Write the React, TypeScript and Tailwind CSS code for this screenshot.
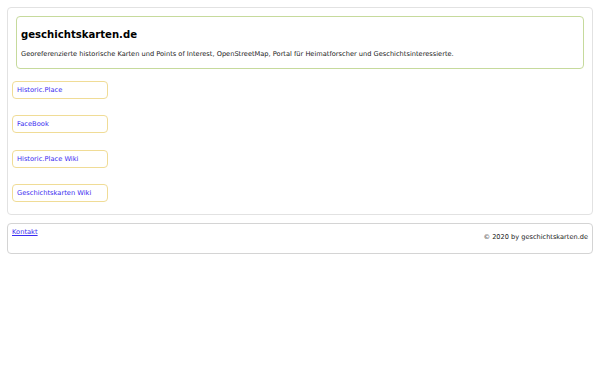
export default function App() {
  const links = ["Historic.Place", "FaceBook", "Historic.Place Wiki", "Geschichtskarten Wiki"];
  return (
    <div className="w-[600px] h-[375px] bg-white px-[7px] pt-[7px]" style={{ fontFamily: '"DejaVu Sans", sans-serif' }}>
      <div className="border border-[#e2e2e2] rounded-[4px] px-[4px] pt-[8px] pb-[12px]">
        <div className="mx-[4px] border border-[#c6da9c] rounded-[4px] px-[4px] pt-[10px] pb-[9px]">
          <div className="text-[10.1px] font-bold text-black leading-[15px]">geschichtskarten.de</div>
          <div className="mt-[7px] text-[6.65px] leading-[10px] text-[#222]">
            Georeferenzierte historische Karten und Points of Interest, OpenStreetMap, Portal für Heimatforscher und Geschichtsinteressierte.
          </div>
        </div>
        <div className="flex flex-col gap-[16.4px] mt-[12px]">
          {links.map((l) => (
            <div key={l} className="w-[96px] h-[18px] border border-[#f0dc96] rounded-[4px] px-[4px] flex items-center">
              <a className="text-[6.7px] text-[#3a2cf0] leading-[10px]">{l}</a>
            </div>
          ))}
        </div>
      </div>
      <div className="mt-[8px] border border-[#d4d4d4] rounded-[4px] h-[31px] px-[4px] pt-[3px]">
        <a className="text-[6.7px] text-[#3a2cf0] underline leading-[10px] block">Kontakt</a>
        <div className="text-[6.6px] text-[#222] leading-[10px] text-right mt-[-5px]">© 2020 by geschichtskarten.de</div>
      </div>
    </div>
  );
}
